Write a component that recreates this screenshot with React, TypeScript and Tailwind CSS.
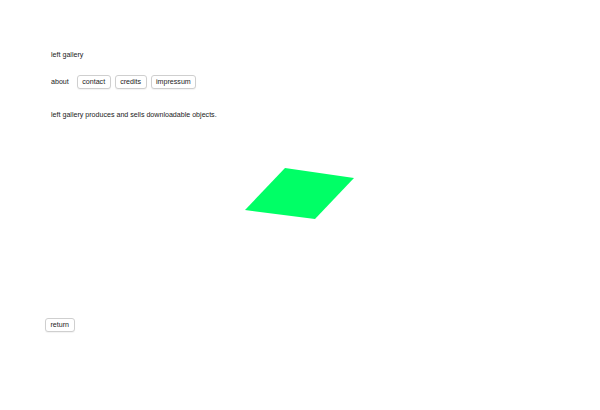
import React from 'react'

const btn =
  'h-[14px] px-[4.5px] rounded-[3px] border border-[#cfcfcf] bg-white text-[7.1px] leading-[12px] text-[#222] shadow-[0_1px_1px_rgba(0,0,0,0.05)]'

export default function App() {
  return (
    <div className="w-[600px] h-[410px] bg-white font-['Liberation_Sans',Arial,sans-serif] text-[#1a1a1a]">
      <div className="pt-[50px] pl-[51px]">
        <h1 className="text-[7.1px] leading-[10px] font-normal">left gallery</h1>
        <nav className="mt-[15px] flex items-center">
          <span className="text-[7.1px] leading-[14px] mr-[8px]">about</span>
          <div className="flex gap-[4px]">
            <button className={btn}>contact</button>
            <button className={btn}>credits</button>
            <button className={btn}>impressum</button>
          </div>
        </nav>
        <p className="mt-[21px] text-[7.1px] leading-[10px]">
          left gallery produces and sells downloadable objects.
        </p>
      </div>
      <div className="mt-[48px] flex justify-center">
        <svg width="110" height="52" viewBox="0 0 110 52">
          <polygon points="40,0 109,10 70,51 0,42" fill="#00ff66" />
        </svg>
      </div>
      <div className="mt-[90px] pl-[45px]">
        <button className={btn}>return</button>
      </div>
    </div>
  )
}
